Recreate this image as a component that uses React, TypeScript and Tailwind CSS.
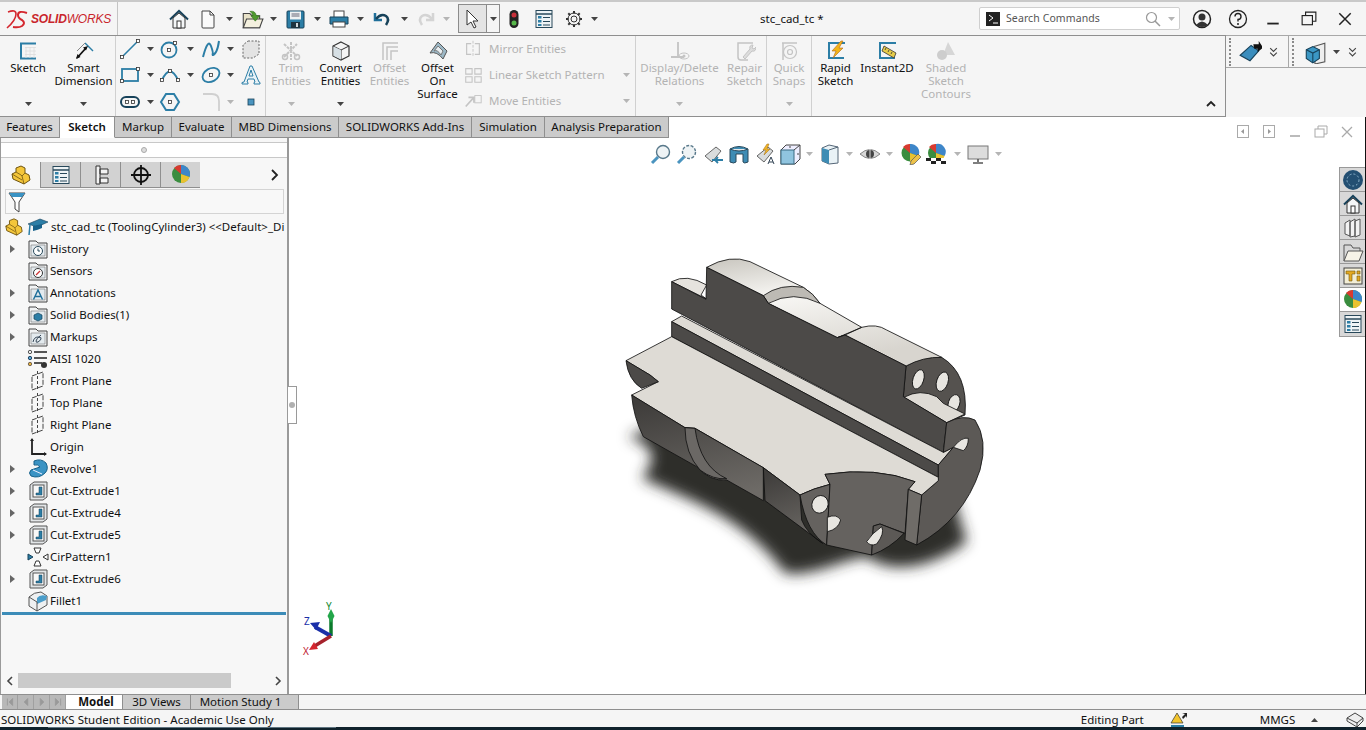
import type { ReactNode } from "react"

const teal = "#2c7ea6"
const navy = "#17425a"
const off = "#c4c4c4"

const Svg = ({ s = 22, children }: { s?: number; children: ReactNode }) => (
  <svg width={s} height={s} viewBox="0 0 22 22" className="shrink-0" fill="none">
    {children}
  </svg>
)

const Caret = ({ off: muted, up }: { off?: boolean; up?: boolean }) => (
  <svg width="7" height="4" viewBox="0 0 7 4" className="shrink-0">
    <path d={up ? "M0 4h7L3.5 0z" : "M0 0h7L3.5 4z"} fill={muted ? "#b5b5b5" : "#444"} />
  </svg>
)

// quick access bar
const HomeIcon = ({ c = navy }: { c?: string }) => (
  <Svg>
    <path d="M2 11.500 11 3l9 8.500" stroke={c} strokeWidth="2" />
    <path d="M5 10v10h12V10L11 5z" fill="#f4f6f7" stroke="#333" />
    <rect x="9" y="13" width="4" height="7" fill="#fff" stroke="#333" />
  </Svg>
)
const PageIcon = () => (
  <Svg>
    <path d="M5 3h8l4 4v12q0 1-1 1H6q-1 0-1-1z" fill="#fafafa" stroke="#444" />
    <path d="M13 3v4h4" stroke="#444" />
  </Svg>
)
const OpenIcon = () => (
  <Svg s={24}>
    <path d="M3 6h6l2 2h7v11H3z" fill="#e8e2c8" stroke="#444" />
    <path d="M3 19l3-8h15l-3 8z" fill="#f4f0de" stroke="#444" />
    <path d="M9 4q5-1 6 4h3l-4 5-4-5h2q-1-3-3-4z" fill="#4f9a2e" stroke="#2f6b1a" strokeWidth=".5" />
  </Svg>
)
const SaveIcon = () => (
  <Svg>
    <rect x="3" y="3" width="17" height="17" rx="1" fill="#2c7ea6" stroke="#17425a" />
    <rect x="6" y="3.500" width="11" height="8" fill="#eef2f3" />
    <path d="M7.500 6h8M7.500 8h8" stroke="#667" />
    <rect x="7" y="14" width="9" height="6" fill="#1e3440" />
    <rect x="12" y="15" width="2" height="4" fill="#cfd8dc" />
  </Svg>
)
const PrintIcon = () => (
  <Svg>
    <rect x="6" y="3" width="10" height="7" fill="#fff" stroke="#444" />
    <path d="M2 9h18v7H2z" fill="#2c7ea6" stroke="#17425a" />
    <rect x="5" y="14" width="12" height="5" fill="#fff" stroke="#444" />
  </Svg>
)
const UndoIcon = ({ c = "#1f6f9a", flip }: { c?: string; flip?: boolean }) => (
  <Svg>
    <g transform={flip ? "matrix(-1 0 0 1 22 0)" : undefined}>
      <path d="M4 5v7h7" fill="none" stroke={c} strokeWidth="2.500" />
      <path d="M5 11q5-6 10-3 4 3 0 9" stroke={flip ? c : "#17425a"} strokeWidth="2.500" />
    </g>
  </Svg>
)
const Pointer = () => (
  <Svg>
    <path d="M6 2v15l4-3 3 6 2-1-3-6h5z" fill="#fff" stroke="#333" />
  </Svg>
)
const Traffic = () => (
  <Svg>
    <rect x="6.500" y="2" width="9" height="18" rx="4.500" fill="#222" />
    <circle cx="11" cy="7" r="2.500" fill="#c8303a" />
    <circle cx="11" cy="15" r="2.500" fill="#57b84a" />
  </Svg>
)
const ListBox = ({ s = 22 }: { s?: number }) => (
  <Svg s={s}>
    <rect x="3" y="2.500" width="16" height="17" fill="#eef3f5" stroke="#28485a" />
    <path d="M3 6h16" stroke="#28485a" strokeWidth="1.500" />
    <rect x="5" y="8" width="3.500" height="2.500" fill="#2c7ea6" />
    <rect x="5" y="12" width="3.500" height="2.500" fill="#2c7ea6" />
    <rect x="5" y="16" width="3.500" height="2" fill="#2c7ea6" />
    <path d="M10 9.500h7M10 13.500h7M10 17h7" stroke="#28485a" />
  </Svg>
)
const Gear = () => (
  <Svg>
    <circle cx="11" cy="11" r="3" stroke="#333" />
    <circle cx="11" cy="11" r="6" stroke="#333" />
    <path d="M11 3v2.500M11 16.500V19M3 11h2.500M16.500 11H19M5.300 5.300l1.800 1.800M14.900 14.900l1.800 1.800M5.300 16.700l1.800-1.800M14.900 7.100l1.800-1.800" stroke="#333" strokeWidth="2" />
  </Svg>
)

// ribbon
const SketchIcon = () => (
  <Svg>
    <path d="M19 3.500H4v15h15" stroke={teal} strokeWidth="2" />
    <path d="M8 7.500h11M8 11h11M8 14.500h11M9 7v11M13 7v11M17 7v11" stroke="#ddd" strokeWidth=".8" />
  </Svg>
)
const SmartIcon = () => (
  <Svg>
    <path d="M12 3l8 8" stroke={teal} strokeWidth="1.500" />
    <path d="M12 3 4 11" stroke="#888" />
    <path d="M4 18 13 8" stroke="#111" strokeWidth="1.800" />
    <path d="M3 19l1.500-5 3 3zM15 6l-5 1.500 3 3z" fill="#111" />
  </Svg>
)
const Pt = ({ x, y }: { x: number; y: number }) => <rect x={x - 1.500} y={y - 1.500} width="3" height="3" fill="#fff" stroke="#333" strokeWidth=".8" />
const LineIcon = () => (
  <Svg>
    <path d="M3 19 19 3" stroke={teal} strokeWidth="1.600" />
    <Pt x={3} y={19} />
    <Pt x={19} y={3} />
  </Svg>
)
const CircleIcon = () => (
  <Svg>
    <circle cx="10" cy="12" r="7.500" stroke={teal} strokeWidth="1.800" />
    <Pt x={10} y={12} />
    <Pt x={16} y={5} />
  </Svg>
)
const SplineIcon = () => (
  <Svg>
    <path d="M3 19Q8 0 11 8t1 9q5 0 7-14" stroke={teal} strokeWidth="2" />
  </Svg>
)
const PlaneDash = () => (
  <Svg>
    <path d="M8 3h11v13l-6 4H3V7z" fill="#e3e3e3" stroke="#666" strokeDasharray="2 1.500" />
  </Svg>
)
const RectIcon = () => (
  <Svg>
    <rect x="3" y="5" width="16" height="12" stroke={teal} strokeWidth="1.800" />
    <Pt x={3} y={17} />
    <Pt x={19} y={5} />
  </Svg>
)
const ArcIcon = () => (
  <Svg>
    <path d="M3 16Q11-1 19 16" stroke={teal} strokeWidth="1.800" />
    <Pt x={3} y={16} />
    <Pt x={19} y={16} />
    <Pt x={11} y={7} />
  </Svg>
)
const EllipseIcon = () => (
  <Svg>
    <ellipse cx="11" cy="11" rx="9" ry="6.500" transform="rotate(-30 11 11)" stroke={teal} strokeWidth="1.800" />
    <Pt x={11} y={11} />
  </Svg>
)
const TextA = ({ s = 22 }: { s?: number }) => (
  <Svg s={s}>
    <path d="M2 20h6v-1.500l-1-.5 1-3h6l1 3-1 .5V20h6v-1.500l-1-.5L12 2h-2L4 18l-2 .5zM9 12l2-6 2 6z" fill="#e8f2f7" stroke={teal} strokeWidth="1" />
  </Svg>
)
const SlotIcon = () => (
  <Svg>
    <rect x="2" y="6" width="18" height="10" rx="5" stroke={navy} strokeWidth="2" />
    <Pt x={8} y={11} />
    <Pt x={14} y={11} />
  </Svg>
)
const PolyIcon = () => (
  <Svg>
    <path d="M7 3h8l5 8-5 8H7l-5-8z" stroke={teal} strokeWidth="2" />
    <Pt x={11} y={11} />
  </Svg>
)
const FilletIcon = () => (
  <Svg>
    <path d="M3 3h9q7 0 7 7v10" stroke="#d0d0d0" strokeWidth="1.800" />
  </Svg>
)
const Dot = () => (
  <Svg>
    <rect x="8" y="8" width="6" height="6" fill="#4a94bf" stroke="#17425a" strokeWidth=".8" />
  </Svg>
)
const TrimIcon = () => (
  <Svg>
    <path d="M4 4l13 12M4 17 17 4M11 2v18" stroke={off} strokeWidth="2" strokeDasharray="3 1" />
    <circle cx="5" cy="17" r="2.500" stroke={off} strokeWidth="1.500" />
    <circle cx="17" cy="17" r="2.500" stroke={off} strokeWidth="1.500" />
  </Svg>
)
const ConvertIcon = () => (
  <Svg>
    <path d="M11 2 19 6v10l-8 4-8-4V6z" fill="#f5f5f5" stroke="#333" strokeWidth="1.200" />
    <path d="M3 6l8 4 8-4M11 10v10" stroke="#333" />
    <path d="M3.500 6.500 11 10v9.500l-7.500-3.700z" fill="#d6dfe4" />
  </Svg>
)
const OffsetIcon = () => (
  <Svg>
    <path d="M4 20V3h15M8 20V7h11M12 20v-9h7" stroke={off} strokeWidth="1.500" />
  </Svg>
)
const SurfaceIcon = () => (
  <Svg>
    <path d="M11 2 20 11l-4 8Q10 11 3 13z" fill="#9cb8c6" stroke="#555" />
    <path d="M11 6 16 11l-2 4Q10 9 7 11z" fill="#e8eef1" stroke="#777" />
  </Svg>
)
const MirrorIcon = () => (
  <Svg s={20}>
    <path d="M11 2v18" stroke={off} strokeDasharray="3 1.500" />
    <path d="M9 5H4v12h5M13 5h5v12h-5" stroke={off} strokeWidth="1.300" />
  </Svg>
)
const PatternIcon = () => (
  <Svg s={20}>
    <path d="M3 4h7v6H3zM13 4h7v6h-7zM3 13h7v6H3zM13 13h7v6h-7z" stroke={off} strokeWidth="1.200" />
  </Svg>
)
const MoveIcon = () => (
  <Svg s={20}>
    <path d="M3 17 12 7M6 7h6v6" stroke={off} strokeWidth="1.800" />
    <rect x="13" y="5" width="7" height="8" stroke={off} />
  </Svg>
)
const RelIcon = () => (
  <Svg>
    <path d="M9 2v15M2 17h13" stroke={off} strokeWidth="1.800" />
    <ellipse cx="15" cy="16" rx="5" ry="3" stroke={off} />
    <circle cx="15" cy="16" r="1.500" fill={off} />
  </Svg>
)
const RepairIcon = () => (
  <Svg>
    <path d="M19 3H4v14q0 3 3 3h7" stroke={off} strokeWidth="1.500" />
    <path d="M9 17l7-8q-1-4 3-4l-1 3 2 1 2-2q0 5-4 4l-7 8z" fill="#ddd" stroke={off} />
  </Svg>
)
const SnapIcon = () => (
  <Svg>
    <path d="M4 3h15M5 3v17" stroke={off} strokeWidth="1.500" />
    <circle cx="12" cy="12" r="6.500" stroke={off} strokeWidth="1.200" />
    <circle cx="12" cy="12" r="2.500" stroke={off} strokeWidth="1.200" />
  </Svg>
)
const RapidIcon = () => (
  <Svg>
    <path d="M20 3H4v15h15" stroke={teal} strokeWidth="2" />
    <path d="M16 1 7 11h4l-3 7 10-10h-4l4-7z" fill="#f2b418" stroke="#b4661a" strokeWidth=".6" />
  </Svg>
)
const InstantIcon = () => (
  <Svg>
    <path d="M20 3H4v15h15" stroke={teal} strokeWidth="2" />
    <path d="M8 6l12 7-2 5-12-7z" fill="#e6cc4a" stroke="#333" strokeWidth=".8" />
    <path d="M10 8l-1 2M13 10l-1 2M16 12l-1 2" stroke="#333" strokeWidth=".8" />
  </Svg>
)
const ShadedIcon = () => (
  <Svg>
    <path d="M13 2l7 13H8z" fill="#d6d6d6" />
    <circle cx="7" cy="15" r="5" fill="#cdcdcd" />
  </Svg>
)
const HeadsIcon = () => (
  <Svg s={24}>
    <path d="M2 14 12 5l7 5-8 9z" fill="#3a8dbd" stroke="#17425a" />
    <path d="M14 4h5V1l4 6-5 4V8h-3z" fill="#111" />
  </Svg>
)
const BoxIcon = () => (
  <Svg s={24}>
    <path d="M10 6 20 3v17l-9 2z" fill="#eee" stroke="#555" />
    <path d="M3 9l6-3 6 3v8l-6 4-6-4z" fill="#3b97c4" stroke="#17425a" />
    <path d="M3 9l6 3 6-3M9 12v9" stroke="#17425a" />
  </Svg>
)
const Grip = () => <div className="h-[28px] w-[3px] border-l-2 border-dotted border-[#8a8a8a]" />
const Dbl = () => (
  <svg width="9" height="10" viewBox="0 0 8 9" className="shrink-0">
    <path d="M1 1l3 3 3-3M1 5l3 3 3-3" stroke="#444" fill="none" />
  </svg>
)

const BigBtn = ({ icon, lines, w, muted, caret }: { icon: ReactNode; lines: string[]; w: string; muted?: boolean; caret?: boolean }) => (
  <div className={`${w} flex h-full shrink-0 flex-col items-center pt-[4px] pb-[10px]`}>
    <div className="mb-[-1px] flex h-[22px] items-center">{icon}</div>
    {lines.map((l) => (
      <span key={l} className={`h-[13px] whitespace-nowrap leading-[13px] ${muted ? "text-[#b3b3b3]" : "text-[#111]"}`}>
        {l}
      </span>
    ))}
    {caret && (
      <div className="mt-auto">
        <Caret off={muted} />
      </div>
    )}
  </div>
)

const Cell = ({ children }: { children: ReactNode }) => <div className="flex items-center justify-center">{children}</div>

const ListRow = ({ icon, label, caret }: { icon: ReactNode; label: string; caret?: boolean }) => (
  <div className="flex h-[26px] items-center text-[#b3b3b3]">
    <div className="flex w-[24px] justify-center">{icon}</div>
    <span className="ml-[4px]">{label}</span>
    {caret && (
      <div className="ml-auto mr-[5px]">
        <Caret off />
      </div>
    )}
  </div>
)

const tabs = [
  ["Features", "w-[60px]"],
  ["Sketch", "w-[55px]"],
  ["Markup", "w-[57px]"],
  ["Evaluate", "w-[60px]"],
  ["MBD Dimensions", "w-[107px]"],
  ["SOLIDWORKS Add-Ins", "w-[133px]"],
  ["Simulation", "w-[73px]"],
  ["Analysis Preparation", "w-[124px]"],
]

// feature tree
const Folder = ({ children }: { children?: ReactNode }) => (
  <Svg>
    <path d="M2 3h7l2 2h9v15H2z" fill="#f1f3f4" stroke="#444" />
    <path d="M4 7h14v11H4z" fill="#e3eaee" stroke="#777" strokeWidth=".6" />
    {children}
  </Svg>
)
const PlaneIcon = () => (
  <Svg>
    <path d="M5 6 16 2v14L5 20z" stroke="#444" strokeDasharray="5 1.500" />
    <path d="M10.500 1v20" stroke="#444" strokeDasharray="3 2" />
  </Svg>
)
const CutIcon = () => (
  <Svg>
    <path d="M3 5l4-3h13v15l-4 3H3z" fill="#e3e6e8" stroke="#555" />
    <rect x="6" y="5" width="11" height="12" fill="#f8f8f8" stroke="#555" />
    <path d="M12 7v6H9v2h6V7z" fill="#2c7ea6" stroke="#17425a" strokeWidth=".5" />
  </Svg>
)
const PartIcon = ({ s = 22 }: { s?: number }) => (
  <Svg s={s}>
    <path d="M2 10l4-2V4l5-2 4 2v5l4 2 1 5-6 4L3 15z" fill="#f4c63a" stroke="#6f5410" />
    <path d="M6 8l5 3 1 1 3-3M12 12l2 8M2 10l10 6" stroke="#6f5410" strokeWidth=".8" />
  </Svg>
)
const CapIcon = () => (
  <Svg>
    <path d="M1 8 13 3l8 3-11 5z" fill="#2c7ea6" stroke="#17425a" strokeWidth=".6" />
    <path d="M6 10v5q5-1 9-3V8z" fill="#17618a" />
    <path d="M3 9 2 19" stroke={teal} strokeWidth="1.500" />
  </Svg>
)

const tree: { label: string; arrow?: boolean; icon: ReactNode }[] = [
  { label: "History", arrow: true, icon: <Folder><circle cx="11" cy="13" r="4.500" fill="#fff" stroke="#28485a" /><path d="M11 10.500V13h2" stroke="#28485a" /></Folder> },
  { label: "Sensors", icon: <Folder><circle cx="11" cy="13" r="4.500" fill="#fff" stroke="#333" /><path d="M9 15l4-4" stroke="#c33" strokeWidth="1.200" /></Folder> },
  { label: "Annotations", arrow: true, icon: <Folder><path d="M6.500 17.500 11 8l4.500 9.500M8 14.500h6" stroke="#1f6f9a" strokeWidth="1.400" /></Folder> },
  { label: "Solid Bodies(1)", arrow: true, icon: <Folder><path d="M11 9l4 2v4l-4 2-4-2v-4z" fill="#2c7ea6" stroke="#17425a" strokeWidth=".7" /></Folder> },
  { label: "Markups", arrow: true, icon: <Folder><path d="M6 16q1-5 5-5t3 2-3 3-2-1 5-6" stroke="#345" /></Folder> },
  { label: "AISI 1020", icon: (
    <Svg>
      <path d="M7 4h13M7 10h13M7 15h8" stroke="#222" strokeWidth="1.500" />
      <circle cx="3" cy="4" r="1.700" fill="#eee" stroke="#555" />
      <circle cx="3" cy="10" r="1.700" fill="#58a6d0" stroke="#246" />
      <circle cx="3" cy="16" r="1.700" fill="#e3b23a" stroke="#765" />
      <circle cx="17" cy="17" r="3" fill="#333" />
    </Svg>
  ) },
  { label: "Front Plane", icon: <PlaneIcon /> },
  { label: "Top Plane", icon: <PlaneIcon /> },
  { label: "Right Plane", icon: <PlaneIcon /> },
  { label: "Origin", icon: (
    <Svg>
      <path d="M5 3v15h14" stroke="#222" strokeWidth="1.800" />
      <path d="M3 5l2-3 2 3zM17 16l3 2-3 2z" fill="#222" />
    </Svg>
  ) },
  { label: "Revolve1", arrow: true, icon: (
    <Svg>
      <path d="M7 3q7-3 12 2 3 6-1 10-6 6-14 3-3-3 0-6l9-3q-2-3-6-2z" fill="#3a93c4" stroke="#17618a" />
      <path d="M6 12l9 4" stroke="#eef" />
    </Svg>
  ) },
  { label: "Cut-Extrude1", arrow: true, icon: <CutIcon /> },
  { label: "Cut-Extrude4", arrow: true, icon: <CutIcon /> },
  { label: "Cut-Extrude5", arrow: true, icon: <CutIcon /> },
  { label: "CirPattern1", icon: (
    <Svg>
      <path d="M7 2h7l-2 5H9zM7 20h7l-2-5H9zM21 8v6l-5-3z" fill="#fff" stroke="#333" />
      <path d="M1 8v6l5-3z" fill="#2c7ea6" stroke="#17425a" />
    </Svg>
  ) },
  { label: "Cut-Extrude6", arrow: true, icon: <CutIcon /> },
  { label: "Fillet1", icon: (
    <Svg>
      <path d="M2 7q5-5 12-5l6 4v9l-10 6-8-5z" fill="#eef0f1" stroke="#555" />
      <path d="M10 8q3-4 10-2l-1 4-9 4z" fill="#4a9dca" />
      <path d="M2 7l8 5v9" stroke="#555" />
    </Svg>
  ) },
]

const TreeRow = ({ label, arrow, icon }: { label: string; arrow?: boolean; icon: ReactNode }) => (
  <div className="flex h-[22px] items-center">
    <div className="flex w-[22px] justify-center">
      {arrow && (
        <svg width="5" height="8" viewBox="0 0 5 8">
          <path d="M0 0l5 4-5 4z" fill="#666" />
        </svg>
      )}
    </div>
    <div className="ml-[4px] flex w-[22px] justify-center">{icon}</div>
    <span className="ml-[1px] whitespace-nowrap text-[#111]">{label}</span>
  </div>
)

// heads-up view toolbar
const Zoomer = ({ dashed }: { dashed?: boolean }) => (
  <Svg>
    <circle cx="13" cy="9" r="6.500" fill="#eef3f5" stroke="#58788a" strokeWidth="1.400" strokeDasharray={dashed ? "3 1.500" : undefined} />
    <path d="M8 14l-6 6" stroke="#4a94bf" strokeWidth="3" />
  </Svg>
)
const Scope = ({ label }: { label?: boolean }) => (
  <Svg>
    <path d="M3 13 14 4l5 4-9 11z" fill="#d9dcdd" stroke="#666" />
    {label ? <path d="M13 1l-4 6h3l-2 5 6-6h-3l2-5z" fill="#eeb52a" stroke="#a36b12" strokeWidth=".5" /> : <path d="M10 17h11m-5-3-3 3 3 3" stroke="#2c7ea6" strokeWidth="1.800" />}
    {label && <path d="M14 21l3-7 3 7M15 19h4" stroke="#345" />}
  </Svg>
)
const SectionIcon = () => (
  <Svg>
    <path d="M2 6q9-5 18 0v13q-4 2-5 0V11H8v8q-2 2-6 0z" fill="#3e8cb4" stroke="#28485a" />
    <path d="M2 6q9 4 18 0" fill="#e4e8ea" stroke="#28485a" />
  </Svg>
)
const ViewCube = () => (
  <Svg>
    <path d="M7 2h14v14l-5 5H2V7z" fill="#eef" stroke="#444" />
    <rect x="2" y="7" width="13" height="14" fill="#90c4df" stroke="#3a6a82" />
    <path d="M15 7l6-5M11 3v2M18 11h2" stroke="#444" />
  </Svg>
)
const DisplayIcon = () => (
  <Svg>
    <path d="M3 5l7-3 9 2v16l-9 1-7-3z" fill="#e9f2f6" stroke="#567" />
    <path d="M3 5l7 2v14l-7-3z" fill="#3e8cb4" />
    <path d="M10 7l9-3" stroke="#567" />
  </Svg>
)
const EyeIcon = () => (
  <Svg>
    <path d="M1 11q10-9 20 0-10 9-20 0z" fill="#d7d7d7" stroke="#888" />
    <circle cx="11" cy="11" r="4" fill="#444" />
    <path d="M11 5v12" stroke="#fff" strokeWidth=".8" />
  </Svg>
)
const Ball = ({ r = 9 }: { r?: number }) => (
  <g>
    <circle cx="11" cy="10" r={r} fill="#3a8d3f" />
    <path d={`M11 10 4 4A${r} ${r} 0 0 1 11 1z`} fill="#d93a30" />
    <path d={`M11 10V1A${r} ${r} 0 0 1 19.500 13z`} fill="#3e86c9" />
    <path d={`M11 10l8.500 3A${r} ${r} 0 0 1 11 19z`} fill="#e9c230" />
  </g>
)
const EditAppearance = () => (
  <Svg>
    <Ball r={8.500} />
    <path d="M12 18 19 11l3 3-7 7-4 1z" fill="#edc24a" stroke="#555" strokeWidth=".7" />
  </Svg>
)
const SceneIcon = () => (
  <Svg>
    <Ball r={8} />
    <path d="M1 15h20v6H1z" fill="#fff" />
    <path d="M1 15h5v3H1zM11 15h5v3h-5zM6 18h5v3H6zM16 18h5v3h-5z" fill="#222" />
  </Svg>
)
const Monitor = () => (
  <Svg>
    <rect x="1" y="3" width="20" height="13" fill="#dcdcdc" stroke="#777" />
    <path d="M11 16v3M6 20h10" stroke="#555" strokeWidth="1.600" />
  </Svg>
)

const hud: { node: ReactNode; w: string }[] = [
  { node: <Zoomer />, w: "w-[26px]" },
  { node: <Zoomer dashed />, w: "w-[26px]" },
  { node: <Scope />, w: "w-[26px]" },
  { node: <SectionIcon />, w: "w-[26px]" },
  { node: <Scope label />, w: "w-[26px]" },
  { node: <ViewCube />, w: "w-[23px]" },
  { node: <Caret off />, w: "w-[17px]" },
  { node: <DisplayIcon />, w: "w-[23px]" },
  { node: <Caret off />, w: "w-[16px]" },
  { node: <EyeIcon />, w: "w-[25px]" },
  { node: <Caret off />, w: "w-[15px]" },
  { node: <EditAppearance />, w: "w-[26px]" },
  { node: <SceneIcon />, w: "w-[26px]" },
  { node: <Caret off />, w: "w-[16px]" },
  { node: <Monitor />, w: "w-[26px]" },
  { node: <Caret off />, w: "w-[14px]" },
]

const WinBtns = ({ c, w, s }: { c: string; w: string; s: number }) => (
  <>
    <div className={`${w} flex justify-center`}>
      <svg width={s} height={s} viewBox="0 0 14 14">
        <path d="M2 11h10" stroke={c} strokeWidth="1.600" />
      </svg>
    </div>
    <div className={`${w} flex justify-center`}>
      <svg width={s} height={s} viewBox="0 0 14 14" fill="none">
        <path d="M4 4V1h9v8h-3" stroke={c} />
        <rect x="1" y="4" width="9" height="8" stroke={c} />
      </svg>
    </div>
    <div className={`${w} flex justify-center`}>
      <svg width={s} height={s} viewBox="0 0 14 14">
        <path d="M2 2l10 10M12 2 2 12" stroke={c} strokeWidth="1.300" />
      </svg>
    </div>
  </>
)

const Model = () => (
  <svg viewBox="0 0 1260 1080" width="420" height="360" className="overflow-visible">
    <defs>
      <filter id="sh" x="-30%" y="-30%" width="160%" height="160%">
        <feGaussianBlur stdDeviation="20" />
      </filter>
      <linearGradient id="top" x1="0" y1="0" x2="0.35" y2="1">
        <stop offset="0" stopColor="#c8c5be" />
        <stop offset=".4" stopColor="#f8f7f4" />
        <stop offset="1" stopColor="#d8d5cf" />
      </linearGradient>
      <linearGradient id="cyl" x1="0.3" y1="0" x2="0.6" y2="1">
        <stop offset="0" stopColor="#3f3d3b" />
        <stop offset="1" stopColor="#6d6a66" />
      </linearGradient>
    </defs>
    <path d="M85 590C170 620 170 660 125 715C270 780 430 830 555 1000C640 1010 720 960 800 950C880 1010 1010 975 1100 905L1040 700L300 500Z" fill="#2e2d2c" filter="url(#sh)" />
    <g stroke="#111" strokeWidth="2.500" strokeLinejoin="round">
      {/* back end face */}
      <path d="M918 378Q970 348 1025 352Q1105 400 1095 525L1040 548L910 470Z" fill="#55524f" />
      <ellipse cx="955" cy="418" rx="16" ry="30" transform="rotate(18 955 418)" fill="#e8e6e1" />
      <ellipse cx="1027" cy="425" rx="17" ry="30" transform="rotate(18 1027 425)" fill="#e8e6e1" />
      <ellipse cx="1062" cy="490" rx="17" ry="27" transform="rotate(18 1062 490)" fill="#e8e6e1" />
      <path d="M912 472Q960 445 1010 470L1030 490L1095 522L1040 548Z" fill="#dedbd5" />
      {/* top cylinder surfaces */}
      <path d="M320 82Q390 42 450 65L610 142Q640 160 660 190L785 262Q830 250 860 270L1025 352Q970 350 918 378L735 285L712 293L505 190L490 167Z" fill="url(#top)" />
      <path d="M490 167Q540 130 610 142Q640 160 660 190Q580 150 505 190Z" fill="#bdbab4" />
      <path d="M712 293L785 262L735 285Z" fill="#d8d5cf" />
      <path d="M215 125Q260 100 320 135L303 165L318 176L215 125Z" fill="#e6e3de" />
      {/* upper dark wall */}
      <path d="M215 125L318 178L320 82L490 167L505 190L712 293L735 285L918 378L910 470L1040 548L1030 637L215 207Z" fill="#4c4a48" />
      {/* slot */}
      <path d="M245 228L1030 637L1060 622L1015 675L215 245Z" fill="#dedbd5" />
      <path d="M215 245V290L1015 712V675Z" fill="#4c4a48" />
      {/* right end face */}
      <path d="M1040 548Q1090 522 1125 540Q1165 600 1140 690Q1090 840 950 915L965 765L1015 722V675L1060 622L1030 637Z" fill="#5c5956" />
      <path d="M1060 622Q1085 590 1105 595Q1105 620 1090 632Z" fill="#e8e6e1" />
      {/* main flat */}
      <path d="M78 362L215 290L1015 712V722L965 765L925 748L945 725Q830 680 675 703L690 733Q640 745 600 765L490 683L285 565L255 563L95 465L175 425L150 405Z" fill="#dedbd5" />
      <path d="M78 362L150 405L175 425L125 445Q85 420 78 362Z" fill="#4c4a48" />
      {/* lower cylinder */}
      <path d="M95 465L255 563L285 565L490 683V782L380 720Q330 725 290 680L130 590Q100 530 95 465Z" fill="url(#cyl)" />
      <path d="M255 563Q255 640 300 690Q340 720 380 716Q300 680 285 565Z" fill="#6b6865" />
      <path d="M490 683L600 765L605 840Q620 880 668 910L495 782Z" fill="url(#cyl)" />
      {/* front end faces */}
      <path d="M600 765Q640 745 690 733L680 915Q620 880 600 765Z" fill="#65625f" />
      <path d="M675 703Q830 680 945 725L925 748L915 880L840 852L820 858L815 945L680 915L690 733Z" fill="#65625f" />
      <path d="M925 748L965 765L950 915L915 900Z" fill="#6f6c68" />
      <path d="M815 945L820 858L840 852L912 880Q870 925 815 945Z" fill="#5c5956" />
      <ellipse cx="660" cy="793" rx="24" ry="27" transform="rotate(25 660 793)" fill="#e8e6e1" />
      <path d="M682 832Q710 820 722 840Q715 868 682 875Z" fill="#e8e6e1" />
      <path d="M800 905Q815 880 845 860Q855 880 830 912Q810 920 800 905Z" fill="#e8e6e1" />
    </g>
  </svg>
)

const Triad = () => (
  <svg width="40" height="56" viewBox="0 0 40 56" className="overflow-visible font-['Noto_Sans',sans-serif]">
    <path d="M30 33V14" stroke="#0b7a2b" strokeWidth="3.500" />
    <path d="M30 6l3.500 7-3.500 7-3.500-7z" fill="#23a64a" />
    <path d="M30 33 14 24" stroke="#1a2fa8" strokeWidth="4" />
    <path d="M9 20l10-1-4 8z" fill="#1a2fa8" />
    <path d="M30 33 12 44" stroke="#a6222c" strokeWidth="3.500" />
    <path d="M8 47l5-8 4 7z" fill="#d4262f" />
    <text x="25" y="7" fontSize="10" fill="#148a34">Y</text>
    <text x="3" y="22" fontSize="10" fill="#1a2fa8">Z</text>
    <text x="2" y="52" fontSize="10" fill="#c02030">X</text>
  </svg>
)

export default function App() {
  return (
    <div className="flex h-[730px] w-[1366px] flex-col overflow-hidden bg-white font-['Noto_Sans',sans-serif] text-[11.5px] text-[#111]">
      {/* title bar */}
      <div className="flex h-[35px] shrink-0 items-center border-t-2 border-[#c9c9c9] bg-[#f5f5f5]">
        <div className="flex h-full w-[118px] shrink-0 items-center gap-[2px] border-r border-[#c4c4c4] pl-[5px]">
          <svg width="24" height="24" viewBox="0 0 24 24" fill="none">
            <path d="M2 21Q11 13 11 7 11 2 3 5" stroke="#d4272e" strokeWidth="1.600" />
            <path d="M22 6Q13 3 13 8q0 3 4 5 4 3 0 6-3 2-9 1" stroke="#d4272e" strokeWidth="2" />
          </svg>
          <span className="whitespace-nowrap font-['Liberation_Sans',sans-serif] text-[12px] font-bold italic tracking-[-0.2px] text-[#c9252c]">
            SOLID<span className="font-normal">WORKS</span>
          </span>
        </div>
        <div className="ml-[50px] flex w-[22px] justify-center"><HomeIcon /></div>
        <div className="ml-[7px] flex w-[22px] justify-center"><PageIcon /></div>
        <div className="flex w-[22px] justify-center"><Caret /></div>
        <div className="flex w-[22px] justify-center"><OpenIcon /></div>
        <div className="flex w-[22px] justify-center"><Caret /></div>
        <div className="flex w-[22px] justify-center"><SaveIcon /></div>
        <div className="flex w-[22px] justify-center"><Caret /></div>
        <div className="flex w-[22px] justify-center"><PrintIcon /></div>
        <div className="flex w-[22px] justify-center"><Caret /></div>
        <div className="flex w-[22px] justify-center"><UndoIcon /></div>
        <div className="flex w-[22px] justify-center"><Caret /></div>
        <div className="flex w-[22px] justify-center"><UndoIcon c="#d4d4d4" flip /></div>
        <div className="flex w-[20px] justify-center"><Caret off /></div>
        <div className="ml-[1px] flex h-[29px] w-[30px] items-center justify-center border border-[#8c8c8c] bg-[#e4e4e4]"><Pointer /></div>
        <div className="flex h-[29px] w-[13px] items-center justify-center border border-l-0 border-[#8c8c8c]"><Caret /></div>
        <div className="ml-[3px] flex w-[22px] justify-center"><Traffic /></div>
        <div className="ml-[8px] flex w-[22px] justify-center"><ListBox /></div>
        <div className="ml-[8px] flex w-[22px] justify-center"><Gear /></div>
        <div className="flex w-[20px] justify-center"><Caret /></div>
        <div className="flex w-[381px] justify-center"><span>stc_cad_tc *</span></div>
        <div className="flex h-[23px] w-[201px] shrink-0 items-center rounded-[2px] border border-[#cfcfcf] bg-white pl-[6px]">
          <div className="flex h-[14px] w-[14px] items-center justify-center bg-[#222]">
            <svg width="12" height="12" viewBox="0 0 12 12" fill="none"><path d="M2 2l4 3-4 3M6 10h5" stroke="#fff" /></svg>
          </div>
          <span className="ml-[6px] text-[10.5px] tracking-[0.1px] text-[#555]">Search Commands</span>
          <svg width="16" height="16" viewBox="0 0 16 16" fill="none" className="ml-auto">
            <circle cx="6.500" cy="6.500" r="5" stroke="#999" strokeWidth="1.200" /><path d="M10 10l5 5" stroke="#999" strokeWidth="1.500" />
          </svg>
          <div className="ml-[7px] mr-[4px]"><Caret off /></div>
        </div>
        <div className="ml-[12px] flex w-[20px] justify-center">
          <svg width="20" height="20" viewBox="0 0 20 20" fill="none">
            <circle cx="10" cy="10" r="8.500" stroke="#222" strokeWidth="1.500" />
            <circle cx="10" cy="8" r="3.500" fill="#333" />
            <path d="M4 16q6-7 12 0-6 4-12 0z" fill="#333" />
          </svg>
        </div>
        <div className="ml-[16px] flex w-[20px] justify-center">
          <svg width="20" height="20" viewBox="0 0 20 20" fill="none">
            <circle cx="10" cy="10" r="8.500" stroke="#222" strokeWidth="1.300" />
            <path d="M7 7.500q0-3 3-3t3 3-3 3v2" stroke="#222" strokeWidth="1.400" />
            <circle cx="10" cy="15" r="1" fill="#222" />
          </svg>
        </div>
        <div className="ml-[7px] flex flex-1 items-center justify-around pr-[3px]">
          <WinBtns c="#222" w="w-[36px]" s={16} />
        </div>
      </div>

      {/* ribbon */}
      <div className="flex h-[82px] shrink-0">
        <div className="flex h-full w-[1226px] shrink-0 items-stretch border-t border-b border-r border-[#8f8f8f] bg-[#f5f5f5]">
          <BigBtn icon={<SketchIcon />} lines={["Sketch"]} w="w-[56px]" caret />
          <BigBtn icon={<SmartIcon />} lines={["Smart", "Dimension"]} w="w-[55px]" caret />
          <div className="w-[5px] shrink-0 border-r border-[#d0d0d0]" />
          <div className="ml-[4px] grid h-full w-[141px] shrink-0 grid-cols-7 grid-rows-3 pb-[1px]">
            <Cell><LineIcon /></Cell><Cell><Caret /></Cell><Cell><CircleIcon /></Cell><Cell><Caret /></Cell><Cell><SplineIcon /></Cell><Cell><Caret /></Cell><Cell><PlaneDash /></Cell>
            <Cell><RectIcon /></Cell><Cell><Caret /></Cell><Cell><ArcIcon /></Cell><Cell><Caret /></Cell><Cell><EllipseIcon /></Cell><Cell><Caret /></Cell><Cell><TextA /></Cell>
            <Cell><SlotIcon /></Cell><Cell><Caret /></Cell><Cell><PolyIcon /></Cell><div /><Cell><FilletIcon /></Cell><Cell><Caret off /></Cell><Cell><Dot /></Cell>
          </div>
          <div className="w-[5px] shrink-0 border-r border-[#d0d0d0]" />
          <BigBtn icon={<TrimIcon />} lines={["Trim", "Entities"]} w="w-[50px]" muted caret />
          <BigBtn icon={<ConvertIcon />} lines={["Convert", "Entities"]} w="w-[49px]" caret />
          <BigBtn icon={<OffsetIcon />} lines={["Offset", "Entities"]} w="w-[49px]" muted />
          <BigBtn icon={<SurfaceIcon />} lines={["Offset", "On", "Surface"]} w="w-[47px]" />
          <div className="flex w-[175px] shrink-0 flex-col border-r border-[#d0d0d0] pb-[1px]">
            <ListRow icon={<MirrorIcon />} label="Mirror Entities" />
            <ListRow icon={<PatternIcon />} label="Linear Sketch Pattern" caret />
            <ListRow icon={<MoveIcon />} label="Move Entities" caret />
          </div>
          <BigBtn icon={<RelIcon />} lines={["Display/Delete", "Relations"]} w="w-[87px]" muted caret />
          <BigBtn icon={<RepairIcon />} lines={["Repair", "Sketch"]} w="w-[43px]" muted />
          <div className="w-[1px] shrink-0 bg-[#d0d0d0]" />
          <BigBtn icon={<SnapIcon />} lines={["Quick", "Snaps"]} w="w-[44px]" muted caret />
          <div className="w-[1px] shrink-0 bg-[#d0d0d0]" />
          <BigBtn icon={<RapidIcon />} lines={["Rapid", "Sketch"]} w="w-[47px]" />
          <BigBtn icon={<InstantIcon />} lines={["Instant2D"]} w="w-[56px]" />
          <BigBtn icon={<ShadedIcon />} lines={["Shaded", "Sketch", "Contours"]} w="w-[62px]" muted />
          <div className="flex flex-1 items-end justify-end pb-[9px] pr-[9px]">
            <svg width="10" height="7" viewBox="0 0 10 7" fill="none"><path d="M1 6l4-4 4 4" stroke="#222" strokeWidth="1.800" /></svg>
          </div>
        </div>
        <div className="flex-1 bg-[#f5f5f5]">
          <div className="flex h-[33px] items-center border-t border-b border-[#a8a8a8]">
            <div className="flex h-full w-[63px] items-center border-r border-[#a8a8a8] pl-[3px]">
              <Grip />
              <div className="ml-[6px]"><HeadsIcon /></div>
              <div className="ml-[7px]"><Dbl /></div>
            </div>
            <div className="flex h-full flex-1 items-center pl-[3px]">
              <Grip />
              <div className="ml-[8px]"><BoxIcon /></div>
              <div className="ml-[6px]"><Caret /></div>
              <div className="ml-[8px]"><Dbl /></div>
            </div>
          </div>
        </div>
      </div>

      {/* command tabs */}
      <div className="flex h-[21px] shrink-0 border-r border-[#111] bg-white">
        {tabs.map(([t, w]) => (
          <div key={t} className={`${w} flex shrink-0 items-center justify-center whitespace-nowrap border-r border-b border-[#8f8f8f] ${t === "Sketch" ? "border-b-white bg-white font-semibold" : t === "Features" ? "bg-[#d6d6d6]" : "bg-[#cbcbcb]"}`}>
            {t}
          </div>
        ))}
        <div className="ml-auto flex items-start pt-[8px] pr-[5px]">
          {[false, true].map((r) => (
            <div key={String(r)} className="flex w-[26px] justify-center">
              <svg width="12" height="13" viewBox="0 0 12 13">
                <rect x=".5" y=".5" width="11" height="12" fill="none" stroke="#aaa" />
                <path d={r ? "M5 4l3 2.500L5 9z" : "M7 4 4 6.500 7 9z"} fill="#999" />
              </svg>
            </div>
          ))}
          <WinBtns c="#aaa" w="w-[26px]" s={14} />
        </div>
      </div>

      {/* main */}
      <div className="flex min-h-0 flex-1">
        <div className="relative z-10 flex w-[289px] shrink-0 flex-col border-r-2 border-l border-[#9a9a9a] bg-[#f7f7f7]">
          <div className="mt-[4px] flex h-[16px] items-center justify-center border-t border-b border-[#c8c8c8] bg-white">
            <div className="h-[6px] w-[6px] rounded-full border border-[#aaa] bg-[#ddd]" />
          </div>
          <div className="mt-[4px] flex h-[26px] items-stretch">
            <div className="flex w-[39px] items-center justify-center"><PartIcon /></div>
            {[<ListBox key="a" />, (
              <Svg key="b">
                <path d="M6 2h4v18H6zM10 5h8v5h-8zM10 14h8v5h-8z" fill="#f3f3f3" stroke="#333" />
              </Svg>
            ), (
              <Svg key="c">
                <circle cx="11" cy="11" r="7" stroke="#111" strokeWidth="1.800" />
                <path d="M11 1v20M1 11h20" stroke="#111" strokeWidth="1.800" />
              </Svg>
            ), (
              <Svg key="d"><Ball /></Svg>
            )].map((n, i) => (
              <div key={i} className="flex w-[40px] items-center justify-center border-l border-b border-[#8f8f8f] bg-[#d2d2d2]">{n}</div>
            ))}
            <div className="ml-auto flex w-[26px] items-center justify-end pr-[8px]">
              <svg width="8" height="12" viewBox="0 0 8 12" fill="none"><path d="M1 1l5 5-5 5" stroke="#222" strokeWidth="1.800" /></svg>
            </div>
          </div>
          <div className="ml-[4px] mr-[3px] mt-[1px] flex h-[25px] items-center border border-[#d4d4d4] bg-[#f8f8f8] pl-[2px]">
            <svg width="18" height="22" viewBox="0 0 18 22" fill="none">
              <path d="M1 2h16l-6 9v10l-4-3v-7z" fill="#fff" stroke="#444" />
              <path d="M1 2h16l-3 4H4z" fill="#3a93c4" />
            </svg>
          </div>
          <div className="mt-[1px] flex h-[23px] items-center pl-[3px]">
            <PartIcon s={20} />
            <div className="ml-[3px]"><CapIcon /></div>
            <span className="ml-[2px] whitespace-nowrap">stc_cad_tc (ToolingCylinder3) &lt;&lt;Default&gt;_Di</span>
          </div>
          <div className="flex flex-col">
            {tree.map((t) => (
              <TreeRow key={t.label} {...t} />
            ))}
          </div>
          <div className="mx-[1px] h-[3px] bg-[#3c8cb8]" />
          <div className="mt-auto mb-[6px] flex h-[15px] items-center">
            <div className="flex w-[17px] justify-center">
              <svg width="7" height="10" viewBox="0 0 7 10" fill="none"><path d="M6 1 2 5l4 4" stroke="#444" strokeWidth="1.600" /></svg>
            </div>
            <div className="h-full w-[213px] bg-[#cacaca]" />
            <div className="flex flex-1 justify-end pr-[5px]">
              <svg width="7" height="10" viewBox="0 0 7 10" fill="none"><path d="M1 1l4 4-4 4" stroke="#444" strokeWidth="1.600" /></svg>
            </div>
          </div>
          <div className="absolute left-[287px] top-[248px] flex h-[38px] w-[9px] items-center justify-center border border-l-0 border-[#9a9a9a] bg-white">
            <div className="h-[6px] w-[6px] rounded-full bg-[#b0b0b0]" />
          </div>
        </div>

        {/* graphics area */}
        <div className="relative flex-1 overflow-hidden border-r border-[#111] bg-white">
          <div className="absolute left-[359px] top-[5px] flex h-[22px] items-center">
            {hud.map((h, i) => (
              <div key={i} className={`${h.w} flex justify-center`}>{h.node}</div>
            ))}
          </div>
          <div className="absolute right-[0px] top-[29px] flex w-[26px] flex-col border border-r-0 border-[#999]">
            {[
              <svg key="g" width="22" height="22" viewBox="0 0 22 22"><circle cx="11" cy="11" r="10" fill="#234f72" /><circle cx="11" cy="11" r="6" fill="none" stroke="#8fb4cc" strokeDasharray="2 2" /></svg>,
              <HomeIcon key="h" />,
              <Svg key="l"><path d="M3 6l5-3v16l-5-2zM8 5l5-3v17l-5 1zM13 4l5-2v16l-5 2z" fill="#f3f3f3" stroke="#555" /></Svg>,
              <Svg key="f"><path d="M2 20V4h7l2 3h7v3" fill="none" stroke="#555" /><path d="M2 20l4-10h15l-4 10z" fill="#f6f3e8" stroke="#555" /></Svg>,
              <Svg key="p"><rect x="2" y="3" width="18" height="16" fill="#f3eed6" stroke="#444" /><path d="M4 6h9v3h-3v7H7V9H4zM15 6h3v3h-3zM15 11h3v5h-3z" fill="#e3a922" stroke="#6f5410" strokeWidth=".6" /></Svg>,
              <Svg key="b"><Ball /></Svg>,
              <ListBox key="t" />,
            ].map((n, i) => (
              <div key={i} className={`flex h-[24px] items-center justify-center border-b border-[#999] last:border-b-0 ${i === 5 ? "bg-white" : "bg-[#d8d8d8]"}`}>{n}</div>
            ))}
          </div>
          <div className="absolute left-[311px] top-[102px]"><Model /></div>
          <div className="absolute left-[12px] top-[465px]"><Triad /></div>
        </div>
      </div>

      {/* bottom tabs */}
      <div className="flex h-[16px] shrink-0 border-t border-b border-[#8f8f8f] bg-[#f5f5f5]">
        <div className="ml-[2px] flex w-[64px] shrink-0 bg-[#b8b8b8]">
          {["M5 4v8M11 4 7 8l4 4z", "M10 4 6 8l4 4z", "M6 4l4 4-4 4z", "M11 4v8M5 4l4 4-4 4z"].map((d) => (
            <div key={d} className="flex flex-1 items-center justify-center border-r border-[#a0a0a0]">
              <svg width="14" height="14" viewBox="0 0 16 16"><path d={d} fill="#999" stroke="#999" /></svg>
            </div>
          ))}
        </div>
        <div className="flex w-[57px] items-center justify-center border-r border-[#8f8f8f] bg-white pl-[4px] font-bold">Model</div>
        <div className="flex w-[68px] items-center justify-center border-r border-[#8f8f8f] bg-[#cbcbcb]">3D Views</div>
        <div className="flex w-[108px] items-center justify-center border-r border-[#8f8f8f] bg-[#cbcbcb] pr-[8px]">Motion Study 1</div>
      </div>

      {/* status bar */}
      <div className="flex h-[17px] shrink-0 items-center bg-[#f5f5f5] pl-[1px] pt-[2px]">
        <span className="whitespace-nowrap">SOLIDWORKS Student Edition - Academic Use Only</span>
        <span className="ml-[807px] w-[60px] whitespace-nowrap">Editing Part</span>
        <div className="ml-[29px]">
          <svg width="18" height="16" viewBox="0 0 18 16">
            <path d="M7 1 13 11H1z" fill="#f2c52e" stroke="#333" strokeWidth=".7" />
            <path d="M12 5l3-3-3-1h5v5l-1-2-3 3z" fill="#222" />
            <path d="M1 13h13v2H1z" fill="#2c7ea6" />
          </svg>
        </div>
        <span className="ml-[72px]">MMGS</span>
        <div className="ml-[16px]"><Caret up /></div>
        <div className="ml-[28px]">
          <svg width="18" height="16" viewBox="0 0 18 16" fill="none">
            <path d="M1 6l8-5 8 5v3l-6 6-10-6z" fill="#eee" stroke="#444" />
            <path d="M1 6l10 5 6-5M11 11v4" stroke="#444" />
          </svg>
        </div>
      </div>
      <div className="flex h-[3px] shrink-0 bg-[#10222c]">
        <div className="ml-[48px] h-[1px] w-[288px] bg-[#5f7480]" />
      </div>
    </div>
  )
}
